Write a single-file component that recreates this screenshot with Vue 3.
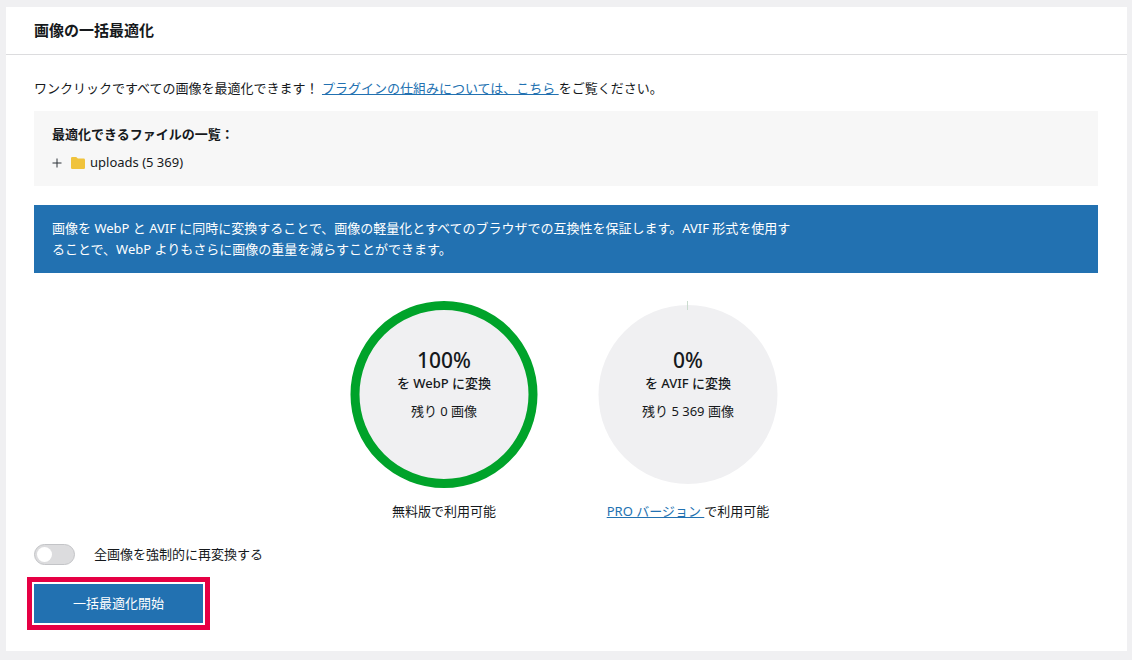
<script setup>
import { ref } from 'vue'

const force = ref(false)
const open = ref(false)
const charts = [
  { percent: 100, format: 'WebP', left: '0' },
  { percent: 0, format: 'AVIF', left: '5 369' },
]
const ringLength = 2 * Math.PI * 89
const dash = (percent) => `${(ringLength * percent) / 100} ${ringLength}`
</script>

<template>
  <main class="page">
    <section class="card">
      <header class="card-header">
        <h1>画像の一括最適化</h1>
      </header>
      <div class="card-body">
        <p class="intro">ワンクリックですべての画像を最適化できます！ <a href="#about">プラグインの仕組みについては、こちら&nbsp;</a>をご覧ください。</p>

        <div class="files">
          <h2>最適化できるファイルの一覧：</h2>
          <button class="tree-item" type="button" :aria-expanded="open" @click="open = !open">
            <svg class="plus" viewBox="0 0 10 10" aria-hidden="true">
              <path d="M5 0.5V9.5M0.5 5H9.5" />
            </svg>
            <svg class="folder" viewBox="0 0 14 12" aria-hidden="true">
              <path d="M1.3 0H5.2L6.9 1.6H12.7Q14 1.6 14 2.9V10.7Q14 12 12.7 12H1.3Q0 12 0 10.7V1.3Q0 0 1.3 0Z" />
            </svg>
            <span>uploads (5 369)</span>
          </button>
        </div>

        <div class="notice">
          <p>画像を WebP と AVIF に同時に変換することで、画像の軽量化とすべてのブラウザでの互換性を保証します。AVIF 形式を使用することで、WebP よりもさらに画像の重量を減らすことができます。</p>
        </div>

        <div class="charts">
          <figure v-for="chart in charts" :key="chart.format" class="chart">
            <div class="dial">
              <svg viewBox="0 0 188 188" aria-hidden="true">
                <circle class="disc" cx="94" cy="94.5" r="89.5" />
                <circle
                  v-if="chart.percent"
                  class="ring"
                  cx="94"
                  cy="94.5"
                  r="89"
                  :stroke-dasharray="dash(chart.percent)"
                  transform="rotate(-90 94 94.5)"
                />
                <path v-else class="tick" d="M93.5 1V10" />
              </svg>
              <div class="dial-text">
                <strong class="percent">{{ chart.percent }}%</strong>
                <span class="format">を {{ chart.format }} に変換</span>
                <span class="left">残り {{ chart.left }} 画像</span>
              </div>
            </div>
            <figcaption v-if="chart.format === 'WebP'">無料版で利用可能</figcaption>
            <figcaption v-else><a href="#pro">PRO バージョン&nbsp;</a>で利用可能</figcaption>
          </figure>
        </div>

        <label class="toggle">
          <input v-model="force" type="checkbox" />
          <span>全画像を強制的に再変換する</span>
        </label>

        <button class="start" type="button">一括最適化開始</button>
      </div>
    </section>
  </main>
</template>

<style>
body {
  background: #f0f0f2;
}
</style>

<style scoped>
.page {
  padding: 7px 5px 9px 6px;
  color: #16191c;
  font-family: "Noto Sans", "Noto Sans CJK JP", sans-serif;
  font-size: 13px;
  line-height: 21px;
}
h1,
h2,
p,
figure {
  margin: 0;
}
a {
  color: #2271b1;
}
.card {
  background: #fff;
}
.card-header {
  padding: 12px 28px;
  border-bottom: 1px solid #dcdcde;
}
h1 {
  font-size: 15px;
  line-height: 23px;
  font-weight: 600;
}
.card-body {
  display: flex;
  flex-direction: column;
  padding: 23px 29px 28px 28px;
}
.intro {
  margin-bottom: 12px;
}
.files {
  padding: 13px 18px;
  margin-bottom: 19px;
  background: #f7f7f7;
}
h2 {
  margin-bottom: 7px;
  font-size: 13px;
  line-height: 21px;
  font-weight: 700;
}
.tree-item {
  display: flex;
  align-items: center;
  padding: 0;
  border: 0;
  background: none;
  color: inherit;
  font: inherit;
  cursor: pointer;
}
.plus {
  width: 10px;
  height: 10px;
  margin-right: 9px;
  fill: none;
  stroke: #2c3338;
}
.folder {
  width: 14px;
  height: 12px;
  margin-right: 5px;
  fill: #f0c33c;
}
.notice {
  padding: 13px 18px;
  margin-bottom: 27px;
  background: #2271b1;
  color: #fff;
}
.notice p {
  max-width: 750px;
}
.charts {
  display: flex;
  justify-content: center;
  gap: 56px;
  margin-bottom: 22px;
}
.chart {
  width: 188px;
  text-align: center;
}
.dial {
  display: grid;
  margin-bottom: 13px;
}
.dial > * {
  grid-area: 1 / 1;
}
.dial svg {
  width: 188px;
  height: 188px;
  overflow: visible;
}
.disc {
  fill: #f0f0f2;
}
.ring {
  fill: none;
  stroke: #00a32a;
  stroke-width: 9;
}
.tick {
  stroke: #cbdccf;
}
.dial-text {
  display: flex;
  flex-direction: column;
  padding-top: 47px;
}
.percent {
  font-size: 21px;
  line-height: 26px;
  font-weight: 500;
}
.format {
  margin-bottom: 7px;
  font-weight: 500;
}
.toggle {
  display: flex;
  align-items: center;
  gap: 19px;
  align-self: flex-start;
  margin-bottom: 19px;
}
.toggle input {
  appearance: none;
  display: flex;
  align-items: center;
  box-sizing: border-box;
  width: 41px;
  height: 21px;
  margin: 0;
  padding: 0 2px;
  border: 1px solid #c3c4c7;
  border-radius: 11px;
  background: #dcdcde;
}
.toggle input::before {
  content: "";
  width: 15px;
  height: 15px;
  border-radius: 50%;
  background: #fff;
}
.toggle input:checked {
  justify-content: flex-end;
  background: #2271b1;
}
.start {
  align-self: flex-start;
  padding: 9px 39px;
  border: 0;
  background: #2271b1;
  color: #fff;
  font: inherit;
  outline: 5px solid #e60044;
  outline-offset: 2px;
  cursor: pointer;
}
</style>
